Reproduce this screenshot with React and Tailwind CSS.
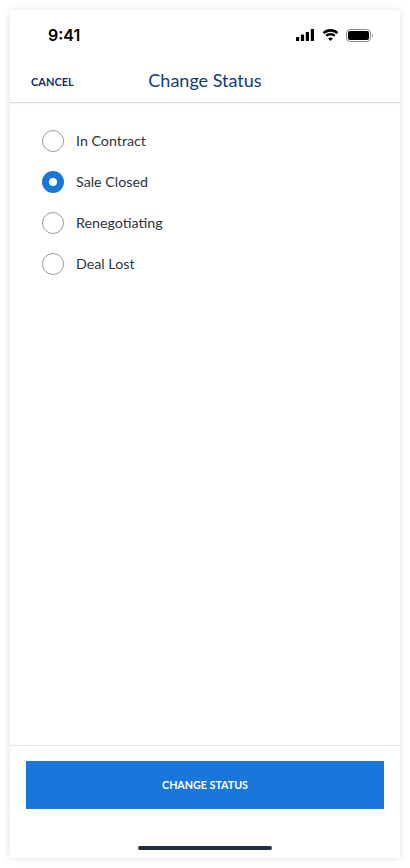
import React from "react";

const options = [
  { label: "In Contract" },
  { label: "Sale Closed", checked: true },
  { label: "Renegotiating" },
  { label: "Deal Lost" },
];

function Radio({ checked }) {
  if (checked) {
    return (
      <span className="flex h-[22px] w-[22px] shrink-0 items-center justify-center rounded-full bg-[#1976db]">
        <span className="h-2 w-2 rounded-full bg-white" />
      </span>
    );
  }
  return <span className="h-[22px] w-[22px] shrink-0 rounded-full border border-[#9a9a9a] bg-white" />;
}

export default function App() {
  return (
    <div className="h-[868px] w-[410px] overflow-hidden bg-white p-[10px] font-['Lato',sans-serif]">
      <div className="flex h-[848px] w-[390px] flex-col bg-white shadow-[0_0_8px_rgba(0,0,0,0.12)]">
        <div className="flex h-[50px] shrink-0 items-center justify-between pl-[38px] pr-[27px]">
          <span className="font-['Inter',sans-serif] text-[16px] font-semibold leading-none text-black">9:41</span>
          <div className="flex items-center gap-[7px]">
            <svg className="mr-px" width="18" height="12" viewBox="0 0 18 12" fill="#000">
              <rect x="0" y="8" width="3.200" height="4" rx="0.6" />
              <rect x="4.900" y="5.500" width="3.200" height="6.500" rx="0.6" />
              <rect x="9.800" y="3" width="3.200" height="9" rx="0.6" />
              <rect x="14.800" y="0" width="3.200" height="12" rx="0.6" />
            </svg>
            <svg width="17" height="12" viewBox="0 0 17 12" fill="#000">
              <path d="M8.500 2.700c2.400 0 4.500.9 6.100 2.400l1.700-1.800C14.200 1.300 11.500.100 8.500.100S2.800 1.300.700 3.300l1.700 1.800C4 3.600 6.100 2.700 8.500 2.700z" />
              <path d="M8.500 6.500c1.300 0 2.500.5 3.400 1.300l1.700-1.800C12.300 4.800 10.500 4 8.500 4S4.700 4.800 3.400 6l1.700 1.800C6 7 7.200 6.500 8.500 6.500z" />
              <path d="M8.500 11.900l2.400-2.500c-.6-.6-1.500-1-2.400-1s-1.800.4-2.400 1z" />
            </svg>
            <svg width="27" height="13" viewBox="0 0 27 13" fill="none">
              <rect x="0.5" y="0.5" width="24" height="12" rx="3.500" stroke="#8e8e8e" />
              <rect x="2" y="2" width="21" height="9" rx="2" fill="#000" />
              <path d="M26 4.500v4c.6-.3 1-1.100 1-2s-.4-1.700-1-2z" fill="#9a9a9a" />
            </svg>
          </div>
        </div>

        <div className="relative flex h-[43px] shrink-0 items-center justify-center border-b border-[#dcdcdc] pb-[3px] shadow-[0_1px_2px_rgba(0,0,0,0.06)]">
          <span className="absolute left-[21px] top-[15px] text-[11px] font-bold leading-[14px] text-[#0f2f6b]">CANCEL</span>
          <span className="text-[18px] leading-[24px] text-[#123a78]">Change Status</span>
        </div>

        <ul className="flex flex-1 flex-col gap-[19px] pl-[32px] pt-[27px]">
          {options.map((o) => (
            <li key={o.label} className="flex h-[22px] items-center gap-3">
              <Radio checked={o.checked} />
              <span className="text-[14.250px] leading-[22px] text-[#2b3440]">{o.label}</span>
            </li>
          ))}
        </ul>

        <div className="flex h-[113px] shrink-0 flex-col border-t border-[#e6e6e6] px-4 pt-[15px]">
          <button className="flex h-12 w-full items-center justify-center bg-[#1976db] text-[10.700px] font-bold text-white">
            CHANGE STATUS
          </button>
          <div className="mt-[37px] flex justify-center">
            <span className="h-1 w-[134px] rounded-full bg-[#252d3a]" />
          </div>
        </div>
      </div>
    </div>
  );
}
